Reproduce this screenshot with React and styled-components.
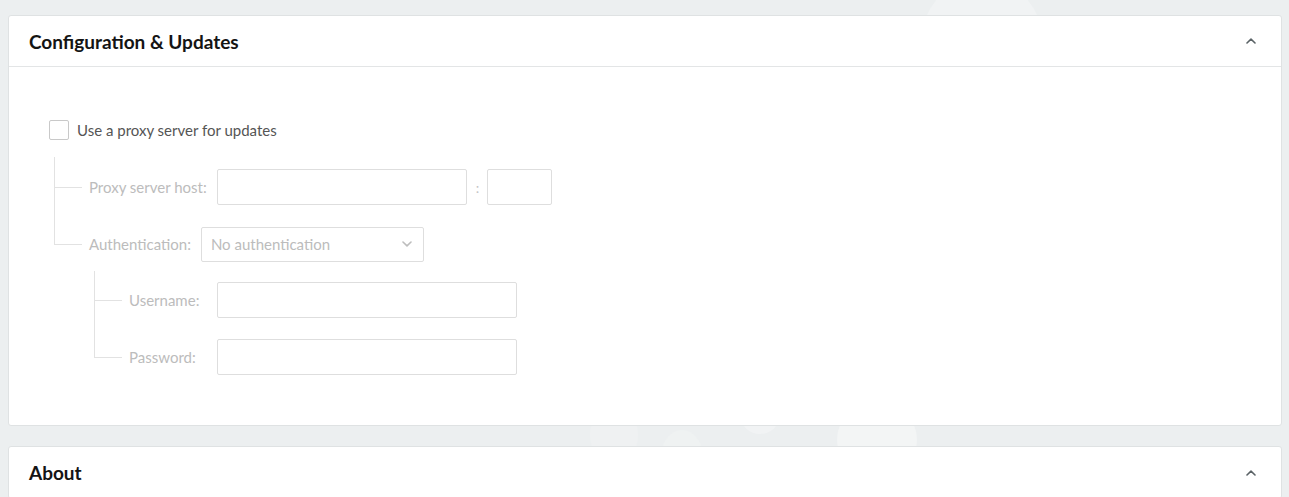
import React from "react";
import styled, { createGlobalStyle } from "styled-components";

const GlobalStyle = createGlobalStyle`
  *, *::before, *::after {
    box-sizing: border-box;
  }
  html, body {
    margin: 0;
    padding: 0;
    background: #eceff0;
    font-family: "Lato", "Liberation Sans", sans-serif;
  }
`;

const Page = styled.div`
  position: relative;
  min-height: 497px;
  padding: 15px 7px 0 8px;
  display: flex;
  flex-direction: column;
  gap: 20px;
  overflow: hidden;
`;

const Bubble = styled.div`
  position: absolute;
  border-radius: 50%;
  background: ${(p) => p.$tone || "#f1f3f4"};
  z-index: 0;
`;

const Card = styled.section`
  position: relative;
  z-index: 1;
  background: #fff;
  border: 1px solid #dfe2e3;
  border-radius: 3px;
`;

const CardHeader = styled.header`
  display: flex;
  align-items: center;
  justify-content: space-between;
  height: 51px;
  padding: 0 25px 0 20px;
  border-bottom: ${(p) => (p.$open ? "1px solid #e3e5e6" : "none")};
`;

const Title = styled.h2`
  margin: 0;
  font-size: 19px;
  font-weight: 700;
  color: #141414;
`;

const Body = styled.div`
  padding: 53px 40px 50px;
`;

const CheckRow = styled.label`
  display: flex;
  align-items: center;
  gap: 8px;
  height: 20px;
  font-size: 15px;
  color: #555;
`;

const Box = styled.span`
  width: 20px;
  height: 20px;
  border: 1px solid #c9c9c9;
  border-radius: 2px;
  background: #fff;
`;

const Tree = styled.div`
  margin-left: ${(p) => p.$indent}px;
  margin-top: ${(p) => p.$top}px;
  padding-top: ${(p) => p.$pad}px;
  display: flex;
  flex-direction: column;
  gap: 21px;
`;

const Item = styled.div`
  position: relative;
  display: flex;
  align-items: center;
  padding-left: 35px;
  height: 36px;

  &::before {
    content: "";
    position: absolute;
    left: 0;
    top: -21px;
    height: calc(100% + 21px);
    border-left: 1px solid #e2e2e2;
  }
  &:first-child::before {
    top: -${(p) => p.$pad || 12}px;
    height: calc(100% + ${(p) => p.$pad || 12}px);
  }
  &:last-child::before {
    height: calc(50% + 21px);
  }
  &::after {
    content: "";
    position: absolute;
    left: 0;
    top: 50%;
    width: 28px;
    border-top: 1px solid #e2e2e2;
  }
`;

const Label = styled.span`
  font-size: 15px;
  color: #bcbcbc;
  margin-right: 10px;
  min-width: ${(p) => (p.$w ? `${p.$w}px` : "auto")};
`;

const Input = styled.div`
  width: ${(p) => p.$w}px;
  height: 36px;
  border: 1px solid #dedede;
  border-radius: 2px;
  background: #fff;
`;

const Colon = styled.span`
  font-size: 14px;
  color: #c4c4c4;
  margin: 0 8px 0 9px;
`;

const Select = styled.div`
  width: 223px;
  height: 35px;
  border: 1px solid #dedede;
  border-radius: 2px;
  display: flex;
  align-items: center;
  justify-content: space-between;
  padding: 0 11px 0 9px;
  font-size: 15px;
  color: #bcbcbc;
`;

const Chevron = ({ up, color }) => (
  <svg width="10" height="6" viewBox="0 0 10 6" fill="none">
    <path
      d={up ? "M1 5L5 1.2L9 5" : "M1 1L5 4.8L9 1"}
      stroke={color}
      strokeWidth="1.6"
      strokeLinecap="round"
      strokeLinejoin="round"
    />
  </svg>
);

export default function App() {
  return (
    <>
      <GlobalStyle />
      <Page>
        <Bubble style={{ left: 922, top: -21, width: 120, height: 120 }} />
        <Bubble $tone="#f3f5f5" style={{ left: 837, top: 400, width: 80, height: 80 }} />
        <Bubble style={{ left: 740, top: 394, width: 40, height: 40 }} />
        <Bubble $tone="#eff2f2" style={{ left: 660, top: 430, width: 44, height: 60 }} />
        <Bubble $tone="#eff1f2" style={{ left: 590, top: 405, width: 48, height: 60 }} />

        <Card>
          <CardHeader $open>
            <Title>Configuration &amp; Updates</Title>
            <Chevron up color="#5a6266" />
          </CardHeader>
          <Body>
            <CheckRow>
              <Box />
              Use a proxy server for updates
            </CheckRow>

            <Tree $indent={5} $top={17} $pad={12}>
              <Item $pad={12}>
                <Label>Proxy server host:</Label>
                <Input $w={250} />
                <Colon>:</Colon>
                <Input $w={65} />
              </Item>
              <Item>
                <Label>Authentication:</Label>
                <Select>
                  No authentication
                  <Chevron color="#bdbdbd" />
                </Select>
              </Item>
            </Tree>

            <Tree $indent={45} $top={9} $pad={11}>
              <Item $pad={11}>
                <Label $w={78}>Username:</Label>
                <Input $w={300} />
              </Item>
              <Item>
                <Label $w={78}>Password:</Label>
                <Input $w={300} />
              </Item>
            </Tree>
          </Body>
        </Card>

        <Card>
          <CardHeader>
            <Title>About</Title>
            <Chevron up color="#5a6266" />
          </CardHeader>
        </Card>
      </Page>
    </>
  );
}
